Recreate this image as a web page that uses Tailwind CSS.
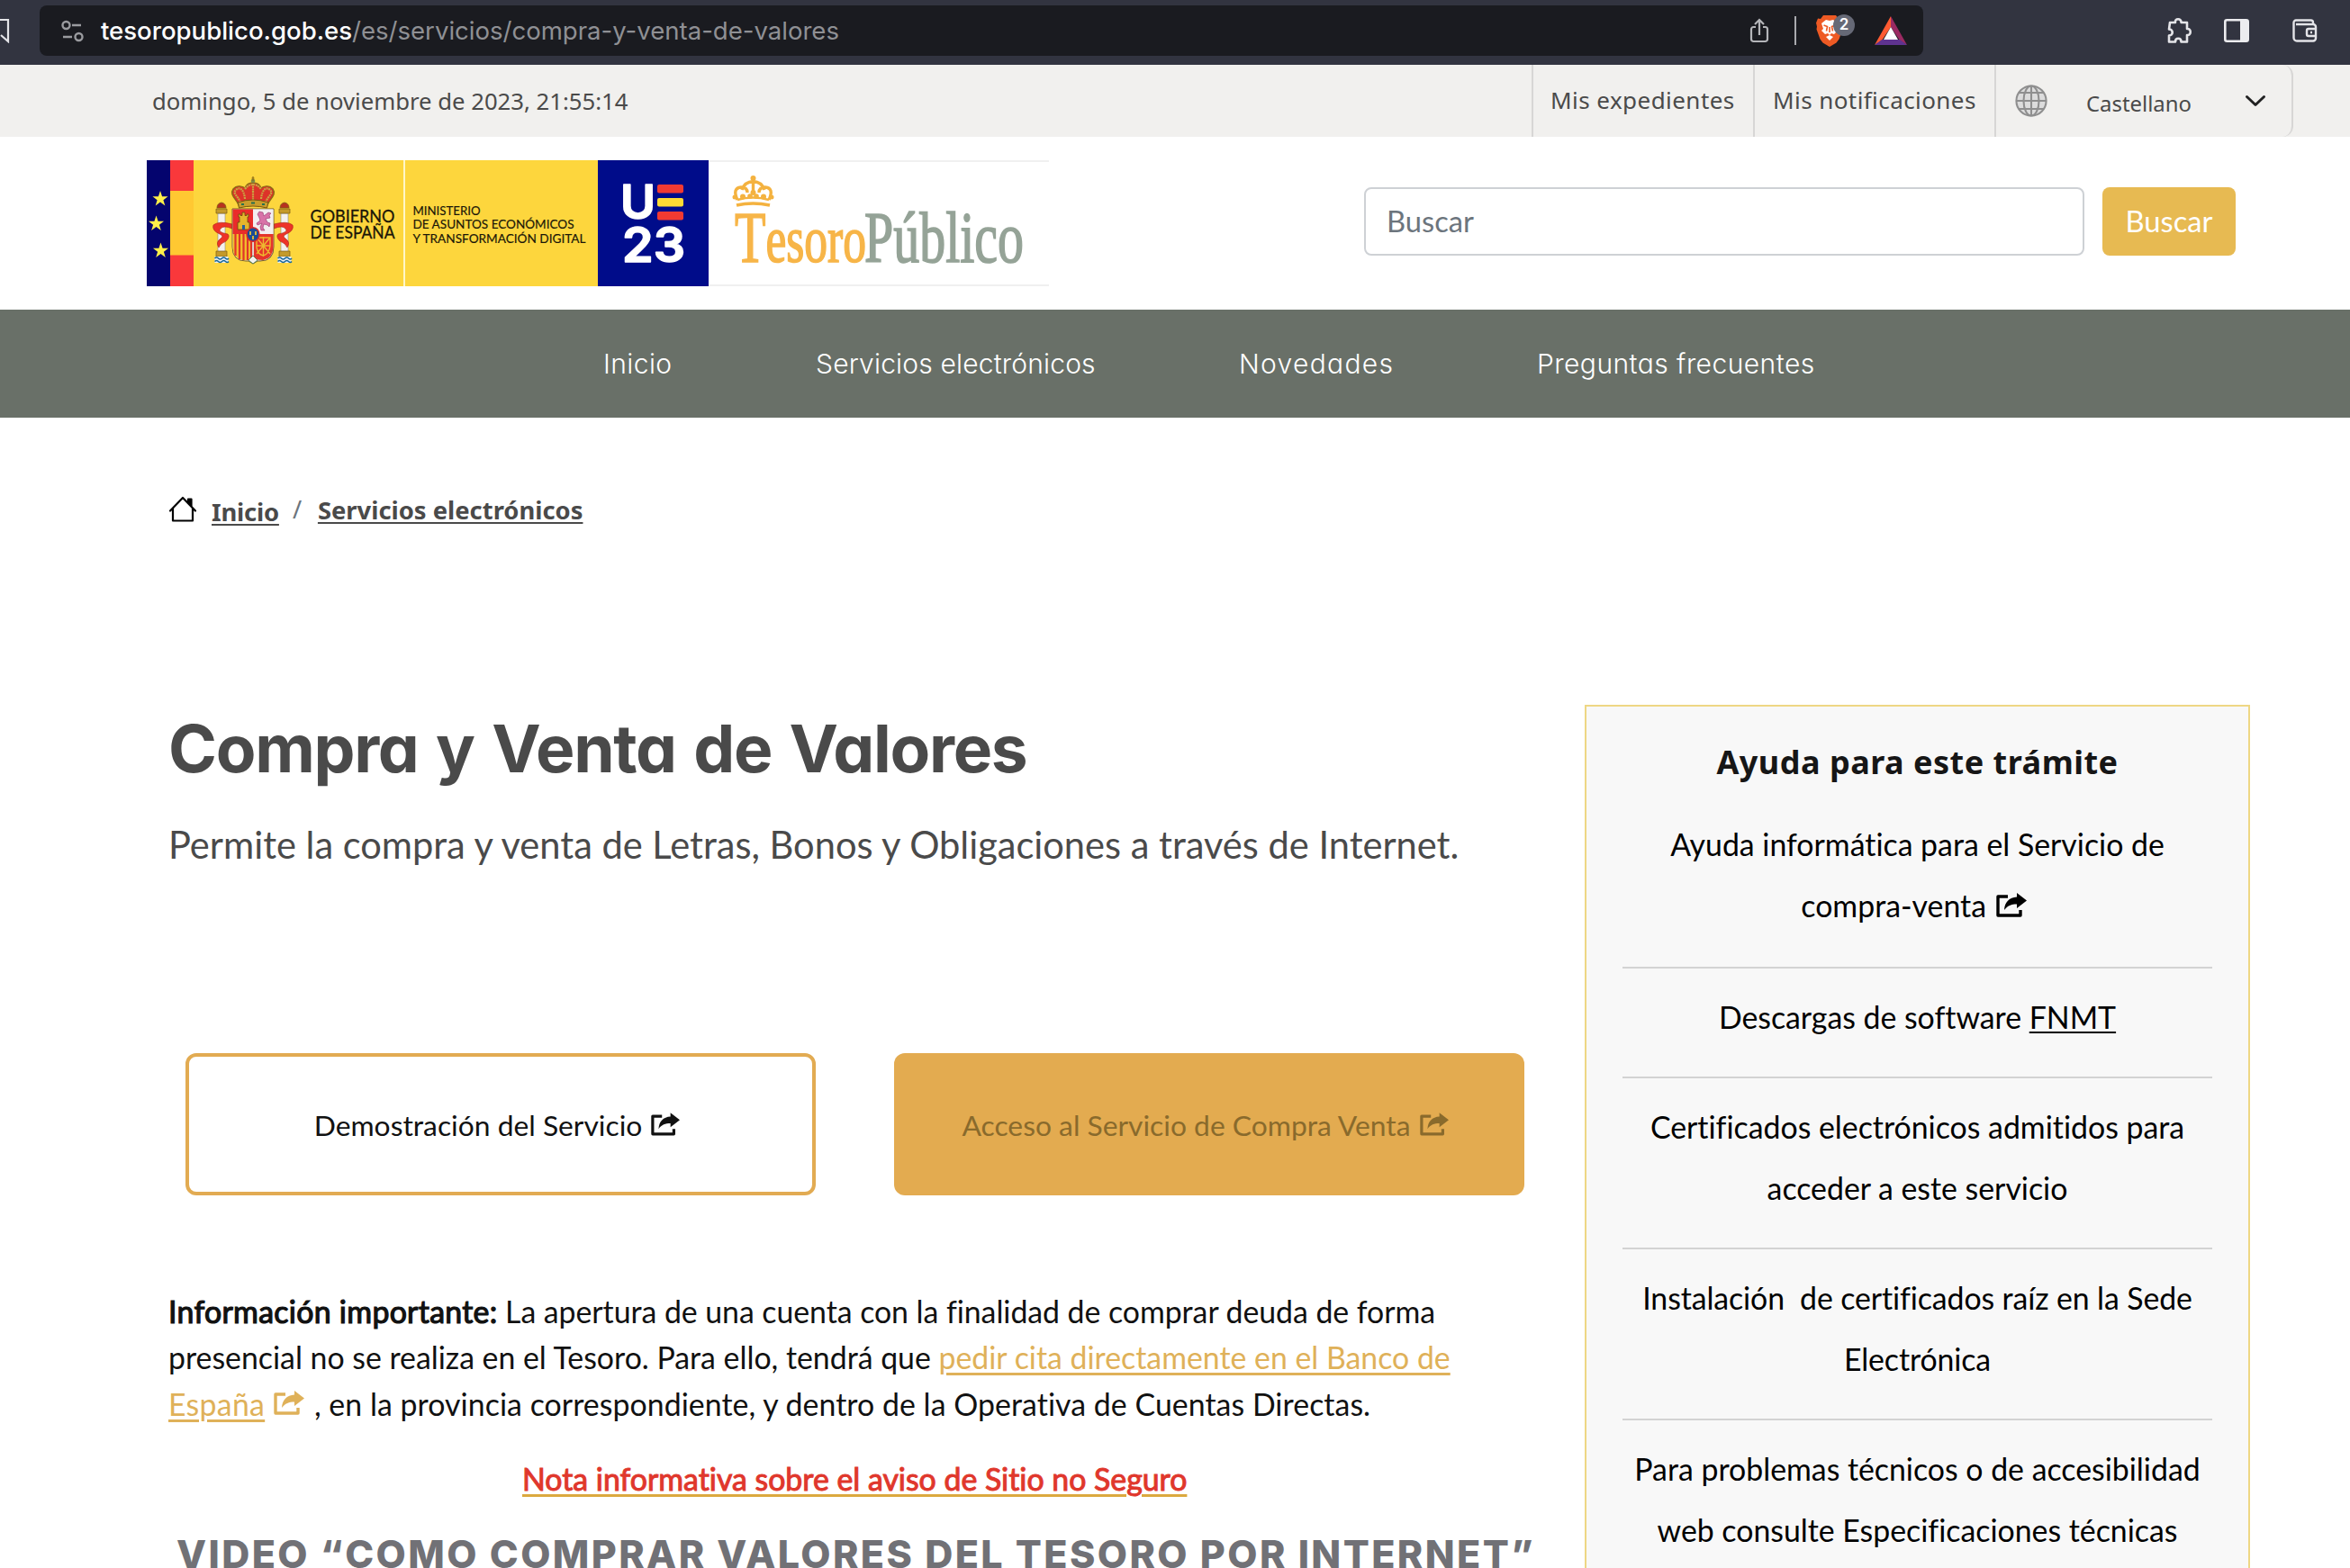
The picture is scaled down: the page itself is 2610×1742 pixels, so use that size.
<!DOCTYPE html>
<html lang="es">
<head>
<meta charset="utf-8">
<title>Compra y Venta de Valores</title>
<script src="https://cdn.jsdelivr.net/npm/@tailwindcss/browser@4"></script>
</head>
<body class="h-[1742px] w-[2610px] overflow-hidden bg-white font-['Lato',sans-serif] whitespace-nowrap [font-variant-ligatures:none]">

<svg class="hidden">
  <symbol id="ext" viewBox="0 0 34 27"><path d="M13 4H2v21h25v-6" fill="none" stroke="currentColor" stroke-width="3.4" stroke-linejoin="round"/><path d="M23 0l11 8.5L23 17v-4.600c-6 0-10.500 1.600-14 6.600C9.500 10.500 14.500 5 23 4.600z" fill="currentColor"/></symbol>
  <symbol id="star" viewBox="-10 -10 20 20"><path d="M0-9.500L2.200-3H9L3.600 1.200 5.600 7.800 0 3.800-5.600 7.800-3.600 1.200-9-3h6.800z" fill="#fff04a"/></symbol>
</svg>

<!-- Browser toolbar -->
<div class="flex h-[72px] items-center bg-[#323440] pb-1">
  <svg class="h-7 w-11 shrink-0" viewBox="0 0 44 28" fill="none" stroke="#e4e4e8" stroke-width="2.200"><path d="M-6 2H9v24L1 19"/></svg>
  <div class="flex h-14 w-[2092px] items-center rounded-lg bg-[#1a1b20] pl-6">
    <svg class="h-[25px] w-[26px]" viewBox="0 0 26 25" fill="none" stroke="#9a9b9f" stroke-width="2.400"><circle cx="5.500" cy="6" r="4"/><path d="M12 6h10M2 19h10"/><circle cx="19.500" cy="19" r="4"/></svg>
    <p class="ml-[18px] font-['Inter',sans-serif] text-[27.55px] leading-[56px] text-[#8f9094]"><span class="font-medium text-white">tesoropublico.gob.es</span>/es/servicios/compra-y-venta-de-valores</p>
    <svg class="mr-7 ml-auto h-[28px] w-[22px]" viewBox="0 0 22 28" fill="none" stroke="#b4b5b9" stroke-width="2.200"><path d="M7 10H4.500A2.500 2.500 0 0 0 2 12.500v11A2.500 2.500 0 0 0 4.500 26h13a2.500 2.500 0 0 0 2.500-2.500v-11a2.500 2.500 0 0 0-2.500-2.500H15M11 19V2M6 7l5-5 5 5"/></svg>
    <div class="h-8 w-0.5 bg-[#a9aaae]"></div>
    <div class="relative ml-[21px] h-9 w-11">
      <svg class="h-9 w-8" viewBox="0 0 32 36"><path d="M9 1h14l3 4 3-.5 2 5-1 4 .5 3-4 11-3 4-7.500 4.500L8.500 31.500l-3-4L1.500 16.500l.5-3-1-4 2-5L6 5z" fill="#ee5a24"/><path d="M16 7l4-1 5 4-2 6 2 2-4 4-3-1-2 2-2-2-3 1-4-4 2-2-2-6 5-4zM12 25l4-2 4 2-4 4z" fill="#fff"/><path d="M9.500 12l4 1.500-1 5M22.500 12l-4 1.500 1 5M16 14v6" stroke="#ee5a24" stroke-width="1.600" fill="none"/></svg>
      <span class="absolute top-0 left-5 flex h-6 w-6 items-center justify-center rounded-full bg-[#666976] font-['Inter',sans-serif] text-[17px] font-semibold text-white">2</span>
    </div>
    <svg class="mr-[18px] ml-[22px] h-[33px] w-9" viewBox="0 0 36 33"><path d="M18 0L0 32l8-5 10-15z" fill="#ff5b32"/><path d="M18 0l18 32-8-5-10-15z" fill="#9b2a62"/><path d="M0 32h36l-8-6H8z" fill="#5f3390"/><path d="M18 12l8 14H10z" fill="#fff"/></svg>
  </div>
  <svg class="ml-[269px] h-8 w-8" viewBox="0 0 32 32" fill="none" stroke="#e4e4e8" stroke-width="2.600" stroke-linejoin="round"><path d="M5 7h6c-1-5 7-5 6.500 0H24v7c5-.5 5 7.500 0 7v7.500h-6.500c0-5-6.500-5-6.500 0H4v-7c5 0 5-7 0-7z"/></svg>
  <svg class="ml-[33px] h-[26px] w-7" viewBox="0 0 28 26"><rect x="1.300" y="1.300" width="25.400" height="23.400" rx="2" fill="none" stroke="#ececef" stroke-width="2.600"/><path d="M18 1h8v24h-8z" fill="#ececef"/></svg>
  <svg class="ml-12 h-[26px] w-7" viewBox="0 0 28 26" fill="none" stroke="#e4e4e8" stroke-width="2.400"><path d="M23 6V4a2.500 2.500 0 0 0-2.500-2.500H4A2.500 2.500 0 0 0 1.500 4v17A3.500 3.500 0 0 0 5 24.500h18a3 3 0 0 0 3-3V9a3 3 0 0 0-3-3H4"/><path d="M27 11h-9a2 2 0 0 0-2 2v4a2 2 0 0 0 2 2h9"/><path d="M20 15h2"/></svg>
</div>

<!-- Utility bar -->
<div class="flex h-20 bg-[#f1f0ee] font-['Noto_Sans',sans-serif] text-[26px] leading-20 text-[#4a4a4a]">
  <p class="ml-[169px] pt-px text-[25.7px]">domingo, 5 de noviembre de 2023, 21:55:14</p>
  <div class="ml-auto flex border-l-2 border-[#d7d6d5]">
    <a class="w-[244px] pl-[19px] leading-[79px] tracking-[0.45px]">Mis expedientes</a>
    <a class="w-[268px] border-l-2 border-[#d7d6d5] pl-5 leading-[79px] tracking-[0.42px]">Mis notificaciones</a>
  </div>
  <div class="mr-[63px] flex w-[332px] items-center rounded-r-xl border-x-2 border-[#d7d6d5] pl-[21px]">
    <svg class="h-9 w-9" viewBox="0 0 38 38" fill="none" stroke="#8f8f8f" stroke-width="2.200"><circle cx="19" cy="19" r="17.500" fill="#dcdcdc"/><ellipse cx="19" cy="19" rx="9" ry="17.500"/><path d="M19 1v36M1.500 19h35M4.500 9.500h29M4.500 28.500h29"/></svg>
    <p class="mt-[5px] ml-[43px] text-[23.9px]">Castellano</p>
    <svg class="ml-[59px] h-3.5 w-6" viewBox="0 0 24 14" fill="none" stroke="#222" stroke-width="3" stroke-linecap="round" stroke-linejoin="round"><path d="M2.500 2.500L12 11.500l9.500-9"/></svg>
  </div>
</div>

<!-- Masthead -->
<header class="flex h-48 items-start pt-[26px] pl-[163px]">
  <svg class="h-[140px] w-[1002px] shrink-0" viewBox="163 178 1002 140">
    <path d="M787 179H1165M787 317H1165" stroke="#f0f0f0" stroke-width="2"/>
    <path d="M163 178h26v140h-26z" fill="#04046e"/>
    <path d="M189 178h26v140h-26z" fill="#f9383b"/><path d="M189 212h26v71.500h-26z" fill="#ffc832"/>
    <path d="M215 178h449v140h-449z" fill="#fdd63d"/><path d="M448 178h2v140h-2z" fill="#fff6c8"/>
    <path d="M664 178h123v140h-123z" fill="#000c8a"/>
    <use href="#star" x="168.500" y="211.500" width="19" height="19"/><use href="#star" x="164" y="239" width="19" height="19"/><use href="#star" x="169" y="269" width="19" height="19"/>
    <!-- Pillars -->
    <g id="pillar"><path d="M242 237h8v47h-8z" fill="#f4f1ee" stroke="#8a8a8a" stroke-width=".6"/><path d="M240 232h12v5h-12zM240 279h12v6h-12z" fill="#c49a2a" stroke="#7c5c14" stroke-width=".7"/><path d="M241 231q0-5 5-6q5 1 5 6z" fill="#b8321f" stroke="#7c5c14" stroke-width=".8"/><path d="M238.500 285h15v7h-15z" fill="#e8eef4"/><path d="M238.500 287q2-2 4 0t4 0 4 0 3.500 0M238.500 290.500q2-2 4 0t4 0 4 0 3.500 0" fill="none" stroke="#18689a" stroke-width="1.500"/></g>
    <use href="#pillar" x="70"/>
    <path d="M237 250q6-5 21-1v5q-10-4-13 0q-4 4 8 6q3 3-2 8q-6 2-8 7q-4-6 2-10q4-3-1-5q-9-4-7-10z" fill="#ee3328" stroke="#a52316" stroke-width=".6"/>
    <path d="M325 250q-6-5-21-1v5q10-4 13 0q4 4-8 6q-3 3 2 8q6 2 8 7q4-6-2-10q-4-3 1-5q9-4 7-10z" fill="#ee3328" stroke="#a52316" stroke-width=".6"/>
    <!-- Shield -->
    <path d="M258 232h46v42q0 16-15 16h-3l-5 3-5-3h-3q-15 0-15-16z" fill="#ddd9d2" stroke="#74602b"/>
    <path d="M258.500 232.500H281V260h-22.500z" fill="#ea2c2a"/><path d="M281 232.500h22.500V260H281z" fill="#f3eef0"/>
    <path d="M258.500 260H280v28q-6 2-10 1q-11-2-11.500-13z" fill="#f2c02c"/><path d="M261.500 260v24M266 260v28M270.500 260v29M275 260v29M279 260v28" stroke="#e0342a" stroke-width="2.200"/>
    <path d="M282 260h21.500v15q-.5 12-11.500 14q-6 0-10-2z" fill="#e5352b"/>
    <path d="M285 264h15v9q-1 9-7.500 11q-6-1-7.500-9zM285 264l15 18M300 264l-15 18M292.500 263v22M285 273h15" fill="none" stroke="#edb82f" stroke-width="1.400"/>
    <path d="M264 255v-8h2v-6h-1v-3h2v1.500h2V236h3v3.500h2V238h2v3h-1v6h2v8z" fill="#e6b52c" stroke="#6b4d0e" stroke-width=".8"/><path d="M269 250h3v5h-3z" fill="#265e9e"/>
    <path d="M286 238l2-3 4 1 1 4 5-4 3 1-2 2 1 3-5 1 2 4 3 1-1 4-2-2-4-1-1 4 2 3h-4l-1-4 2-4-5 2-1-2 4-3-1-3z" fill="#d873a8" stroke="#95346a" stroke-width=".6"/>
    <ellipse cx="281" cy="260.500" rx="7" ry="7.800" fill="#1c4b96" stroke="#d92b2b" stroke-width="1.400"/><path d="M278 257v4M284 257v4M281 262v4" stroke="#e9c137" stroke-width="1.800"/>
    <path d="M276 289l5-5 5 5-5 4z" fill="#f4f1ee" stroke="#3e7442" stroke-width=".8"/>
    <!-- Crown -->
    <path d="M266 230c-2-8-12-13-7-20c4-5 11-3 13-1c2-5 6-6 9-6s7 1 9 6c2-2 9-4 13 1c5 7-5 12-7 20q-15-4-30 0z" fill="#dd3329" stroke="#8b6a17" stroke-width="1.400"/>
    <path d="M267 225c-3-8-9-10-5-14s9-1 10 10M281 204v19M295 225c3-8 9-10 5-14s-9-1-10 10M272 210q4-5 9-5t9 5" fill="none" stroke="#c9a542" stroke-width="2.200" stroke-dasharray="2 .7"/>
    <path d="M264 225q17-6 34 0l-1.500 6q-15.500-4-31 0z" fill="#c99d2c" stroke="#775611" stroke-width="1"/><path d="M268 227h3M279 225.500h4M291 227h3" stroke="#267150" stroke-width="2"/><circle cx="281" cy="201" r="2.300" fill="#7b8b44"/><path d="M281 196v5M279.500 198h3" stroke="#8b6a17" stroke-width="1.200"/>
    <g font-family="Lato" fill="#1a1608">
      <text x="344.500" y="247" font-size="19" textLength="94" lengthAdjust="spacingAndGlyphs" stroke="#1a1608" stroke-width=".3">GOBIERNO</text>
      <text x="344.500" y="265" font-size="19" textLength="94" lengthAdjust="spacingAndGlyphs" stroke="#1a1608" stroke-width=".3">DE ESPAÑA</text>
      <g font-size="12.600" stroke="#1a1608" stroke-width=".15"><text x="458.500" y="239" textLength="75" lengthAdjust="spacingAndGlyphs">MINISTERIO</text><text x="458.500" y="254.300" textLength="179" lengthAdjust="spacingAndGlyphs">DE ASUNTOS ECONÓMICOS</text><text x="458.500" y="269.500" textLength="192" lengthAdjust="spacingAndGlyphs">Y TRANSFORMACIÓN DIGITAL</text></g>
    </g>
    <g font-family="Inter" font-weight="600" fill="#fff" stroke="#fff" stroke-width="1.600" stroke-linejoin="round"><text x="689" y="243" font-size="52" textLength="39" lengthAdjust="spacingAndGlyphs">U</text><text x="691" y="290.500" font-size="53" textLength="70" lengthAdjust="spacingAndGlyphs">23</text></g>
    <g><rect x="730" y="205" width="29" height="9.500" rx="2" fill="#f13a32"/><rect x="730" y="220" width="29" height="9.500" rx="2" fill="#fddb35"/><rect x="730" y="235" width="29" height="9.500" rx="2" fill="#f13a32"/></g>
    <g font-family="Liberation Serif" stroke-width="1.700"><text x="816" y="290.500" font-size="81" textLength="146" lengthAdjust="spacingAndGlyphs" fill="#f7b548" stroke="#f7b548">T<tspan font-size="74">esoro</tspan></text><text x="960" y="290.500" font-size="80" textLength="177" lengthAdjust="spacingAndGlyphs" fill="#95a397" stroke="#95a397">Público</text></g>
    <g fill="none" stroke="#f4b23f" stroke-width="3.400"><path d="M818 228q18-4 37 0" stroke-width="3.600"/><path d="M819 222q-6-13 4-14q7 0 7 6M854 222q6-13-4-14q-7 0-7 6M824 211q3-9 12.500-9.500q9.500.5 12.500 9.500M836.500 198v14"/><path d="M819 222q17-5 35 0" stroke-width="2.500"/></g>
    <g fill="#f4b23f"><circle cx="836.500" cy="198" r="3"/><circle cx="836.500" cy="214" r="3"/><circle cx="833" cy="218" r="2.800"/><circle cx="840" cy="218" r="2.800"/><circle cx="825" cy="218.500" r="3"/><circle cx="848" cy="218.500" r="3"/><circle cx="816" cy="219" r="2.500"/><circle cx="857" cy="219" r="2.500"/></g>
  </svg>
  <form class="mt-[30px] ml-[350px] flex gap-5 text-[32.7px] leading-[74px]">
    <div class="h-[76px] w-[800px] rounded-lg border-2 border-[#ced1d5] pl-[23px] leading-[71px] text-[#6c757d]">Buscar</div>
    <div class="h-[76px] w-[148px] rounded-lg bg-[#e7ba52] text-center leading-[75px] text-white">Buscar</div>
  </form>
</header>

<!-- Main navigation -->
<nav class="flex h-[120px] bg-[#697068] pl-[670px] font-['Inter',sans-serif] text-[30px] leading-[121px] font-light text-white [font-feature-settings:'cv11']">
  <a class="w-[236px] tracking-[0.4px]">Inicio</a><a class="w-[470px] tracking-[0.17px]">Servicios electrónicos</a><a class="w-[331px] tracking-[1.3px]">Novedades</a><a class="tracking-[0.45px]">Preguntas frecuentes</a>
</nav>

<div class="flex justify-between pr-[111px] pl-[187px]">
  <main class="w-[1520px]">
    <div class="mt-[82px] flex h-10 items-center font-['Noto_Sans',sans-serif] text-[27.4px] leading-10 font-bold text-[#4a4a4a]">
      <svg class="h-[30px] w-8" viewBox="0 0 32 30" fill="none" stroke="#000" stroke-width="2.200" stroke-linejoin="round" stroke-linecap="round"><path d="M2 16.500L16 2l14 14.500M5 14v13.500h22V14"/><path d="M22 3.500h3.500v7.500L22 7.500z" fill="#000"/></svg>
      <a class="mt-[5px] ml-4 tracking-[-0.2px] underline decoration-2 underline-offset-[3px]">Inicio</a>
      <span class="mx-[15px] w-[11px] font-normal text-[#6c757d]">/</span>
      <a class="mt-px ml-0.5 underline decoration-2 underline-offset-[3px]">Servicios electrónicos</a>
    </div>
    <h1 class="mt-[202px] h-[88px] font-['Inter',sans-serif] text-[73px] leading-[88px] font-bold tracking-[-1.3px] text-[#4a4a4a] [font-feature-settings:'cv11'] [word-spacing:3.5px]">Compra y Venta de Valores</h1>
    <p class="mt-8 h-[60px] text-[41.6px] leading-[60px] text-[#4a4a4a]">Permite la compra y venta de Letras, Bonos y Obligaciones a través de Internet.</p>
    <div class="mt-[202px] flex gap-[87px] pl-[19px] text-[31.8px]">
      <a class="flex h-[158px] w-[700px] items-center justify-center gap-[10px] rounded-xl border-4 border-[#e2ab52] pt-[3px] pr-2 text-[#111]">Demostración del Servicio <svg class="mb-1 h-[26px] w-[32px]"><use href="#ext"/></svg></a>
      <a class="flex h-[158px] w-[700px] items-center justify-center gap-[10px] rounded-xl bg-[#e3ab50] pt-[3px] pr-[9px] text-[#896a2c]">Acceso al Servicio de Compra Venta <svg class="mb-1 h-[26px] w-[32px]"><use href="#ext"/></svg></a>
    </div>
    <div class="mt-[104px] text-[33.85px] leading-[51.4px] text-[#111]">
      <p><span class="tracking-[0.3px] [-webkit-text-stroke:1.2px]">Información importante:</span><span class="tracking-[-0.04px]"> La apertura de una cuenta con la finalidad de comprar deuda de forma</span></p>
      <p>presencial no se realiza en el Tesoro. Para ello, tendrá que <a class="text-[#dfb159] underline decoration-[3px] underline-offset-[4px]">pedir cita directamente en el Banco de</a></p>
      <p><a class="tracking-[0.3px] text-[#dfb159] underline decoration-[3px] underline-offset-[4px]">España</a><svg class="mr-[2px] ml-[10px] inline h-[27px] w-[34px] align-[1px] text-[#dfb159]"><use href="#ext"/></svg><span class="tracking-[0.06px]"> , en la provincia correspondiente, y dentro de la Operativa de Cuentas Directas.</span></p>
    </div>
    <p class="mt-[31px] ml-[393px] leading-[52px] text-[33.85px]"><a class="text-[#e0372c] underline decoration-[#dba93f] decoration-[3px] underline-offset-[4px] [-webkit-text-stroke:1px]">Nota informativa sobre el aviso de Sitio no Seguro</a></p>
    <h2 class="mt-[27px] ml-[9px] font-['Inter',sans-serif] text-[43px] leading-[60px] font-extrabold tracking-[2.42px] text-[#717176]">VIDEO “COMO COMPRAR VALORES DEL TESORO POR INTERNET”</h2>
  </main>

  <aside class="mt-[319px] h-[1000px] w-[739px] shrink-0 border-2 border-[#eed784] bg-[#f8f8f8] px-10 text-center text-[33.85px] leading-[68px] text-black">
    <h2 class="mt-7 font-['Noto_Sans',sans-serif] text-[36px] font-bold tracking-[0.5px] text-[#161616]">Ayuda para este trámite</h2>
    <p class="mt-[23px] border-b-2 border-[#d3d3d3] pb-[34px]">Ayuda informática para el Servicio de<br><span class="pr-2">compra-venta <svg class="ml-0.5 inline h-[27px] w-[34px] align-[0px]"><use href="#ext"/></svg></span></p>
    <p class="border-b-2 border-[#d3d3d3] pt-5 pb-8">Descargas de software <a class="underline decoration-2 underline-offset-[3px]">FNMT</a></p>
    <p class="border-b-2 border-[#d3d3d3] pt-5 pb-[32px]">Certificados electrónicos admitidos para<br>acceder a este servicio</p>
    <p class="border-b-2 border-[#d3d3d3] pt-5 pb-[32px] tracking-[-0.1px]">Instalación&nbsp; de certificados raíz en la Sede<br>Electrónica</p>
    <p class="pt-5">Para problemas técnicos o de accesibilidad<br>web consulte Especificaciones técnicas</p>
  </aside>
</div>
</body>
</html>
